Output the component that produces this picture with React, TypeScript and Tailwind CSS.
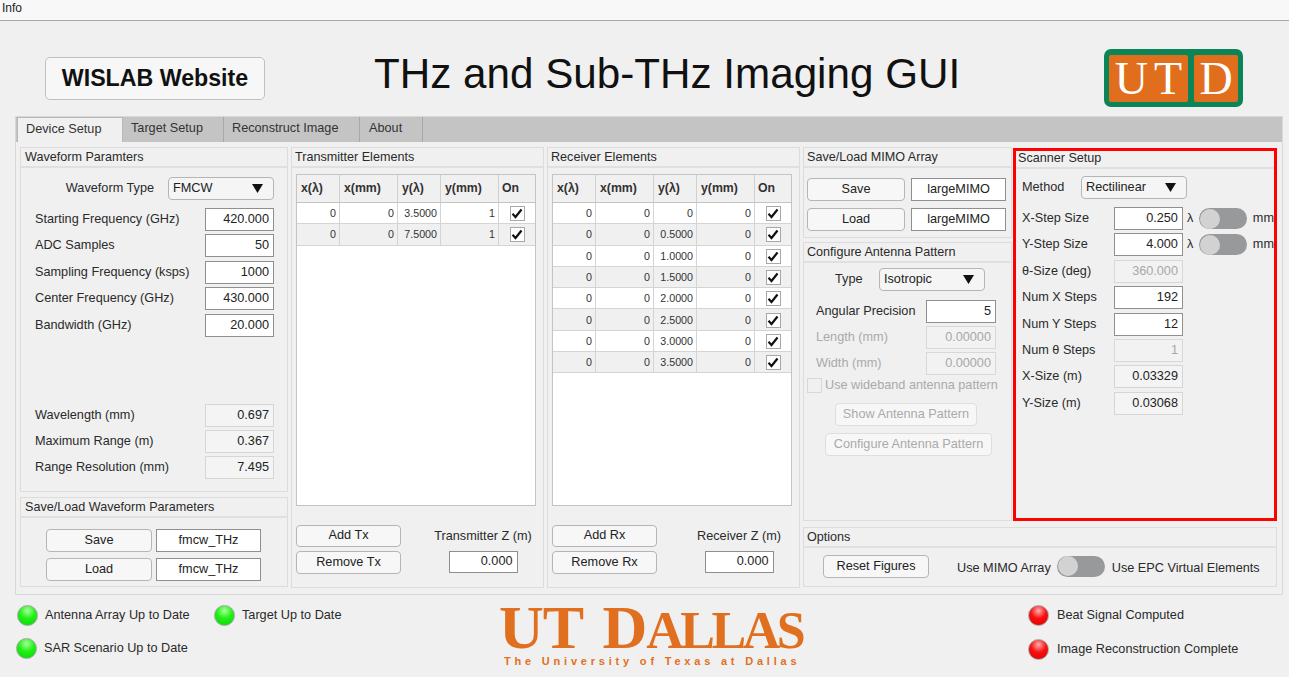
import type { ReactNode } from "react";

const sans = "font-['Liberation_Sans',Arial,sans-serif]";

function Panel({ title, className, titleInset = "pl-[3px]", children }: { title: string; className: string; titleInset?: string; children: ReactNode }) {
  return (
    <section className={`border border-[#dcdcdc] flex flex-col ${className}`}>
      <div className={`h-[18px] leading-[18px] border-b-2 border-[#e0e0e0] box-content text-[12.6px] text-[#2a2a2a] ${titleInset}`}>{title}</div>
      {children}
    </section>
  );
}

function Btn({ label, className, disabled }: { label: string; className: string; disabled?: boolean }) {
  return (
    <button
      className={`rounded-[4px] border-[1.5px] flex items-center justify-center bg-[#f7f7f7] text-[12.7px] ${disabled ? "border-[#dedede] text-[#aaaaaa]" : "border-[#b5b5b5] text-[#222222]"} ${className}`}
    >
      {label}
    </button>
  );
}

function Box({ value, kind = "edit", className = "w-[69px] h-[23px]", center }: { value: string; kind?: "edit" | "show" | "off"; className?: string; center?: boolean }) {
  const look =
    kind === "edit"
      ? "bg-white border-[#8f8f8f] text-[#222222]"
      : kind === "show"
        ? "bg-[#f4f4f4] border-[#d6d6d6] text-[#222222]"
        : "bg-[#f2f2f2] border-[#d8d8d8] text-[#a8a8a8]";
  return (
    <div className={`border-[1.5px] flex items-center text-[12.7px] shrink-0 ${center ? "justify-center" : "justify-end pr-[4px]"} ${look} ${className}`}>
      {value}
    </div>
  );
}

function Dropdown({ value, className = "" }: { value: string; className?: string }) {
  return (
    <div className={`w-[106px] h-[23px] rounded-[4px] border-[1.5px] border-[#b5b5b5] bg-[#f5f5f5] flex items-center justify-between pl-[4px] pr-[10px] text-[12.7px] text-[#222222] ${className}`}>
      <span>{value}</span>
      <svg width="11" height="9" viewBox="0 0 11 9">
        <path d="M0 0H11L5.5 9Z" fill="#111111" />
      </svg>
    </div>
  );
}

function Toggle() {
  return (
    <div className="w-[48px] h-[21px] rounded-full bg-[#98999b] shrink-0 flex items-center pl-[1px]">
      <div className="w-[20px] h-[20px] rounded-full bg-[#d2d2d2]" />
    </div>
  );
}

function Led({ on, className = "" }: { on: boolean; className?: string }) {
  const fill = on
    ? "bg-[radial-gradient(circle_at_50%_25%,#a8ff9c_0%,#22f016_45%,#00d800_100%)]"
    : "bg-[radial-gradient(circle_at_50%_25%,#ffb0b0_0%,#f81010_45%,#e00000_100%)]";
  return <div className={`w-[21px] h-[21px] rounded-full border border-[#a5a5a5] shrink-0 ${fill} ${className}`} />;
}

function Check() {
  return (
    <div className="w-[15px] h-[15px] border border-[#a8a8a8] bg-white flex items-center justify-center mt-[1px]">
      <svg width="12" height="11" viewBox="0 0 12 11">
        <path d="M1.5 5.8L4.5 9L10.5 1.5" fill="none" stroke="#111111" strokeWidth="2.2" />
      </svg>
    </div>
  );
}

const tableCols = "grid grid-cols-[43px_58px_43px_58px_36px]";

function ElementTable({ rows }: { rows: [string, string, string, string][] }) {
  return (
    <div className="w-[240px] h-[332px] border border-[#c4c4c4] bg-white">
      <div className={`${tableCols} h-[28px] bg-[#f0f0f0] border-b border-[#c4c4c4] text-[12.3px] font-bold text-[#333333]`}>
        {["x(λ)", "x(mm)", "y(λ)", "y(mm)", "On"].map((h) => (
          <div key={h} className="pl-[4px] flex items-center border-r border-[#d0d0d0] last:border-r-0 last:pl-[3px]">
            {h}
          </div>
        ))}
      </div>
      {rows.map((r, i) => (
        <div key={i} className={`${tableCols} h-[21.3px] border-b border-[#d4d4d4] text-[10.7px] text-[#333333] ${i % 2 ? "bg-[#f0f0f0]" : "bg-white"}`}>
          {r.map((v, j) => (
            <div key={j} className="flex items-center justify-end pr-[3px] border-r border-[#d4d4d4]">
              {v}
            </div>
          ))}
          <div className="flex items-center justify-center">
            <Check />
          </div>
        </div>
      ))}
    </div>
  );
}

function ElementPanel({ title, kind, zLabel, rows }: { title: string; kind: string; zLabel: string; rows: [string, string, string, string][] }) {
  return (
    <Panel title={title} className="w-[253px]">
      <div className="pl-[4px] pt-[6px]">
        <ElementTable rows={rows} />
        <div className="flex mt-[19px]">
          <div className="flex flex-col gap-[4px] w-[105px]">
            <Btn label={`Add ${kind}`} className="h-[22px]" />
            <Btn label={`Remove ${kind}`} className="h-[23px]" />
          </div>
          <div className="flex flex-col items-center ml-[33px] w-[98px]">
            <div className="text-[12.7px] text-[#2a2a2a] mt-[3px] leading-[16px] whitespace-nowrap">{zLabel}</div>
            <Box value="0.000" className="w-[69px] h-[22px] mt-[7px]" />
          </div>
        </div>
      </div>
    </Panel>
  );
}

function Row({ label, value, kind = "edit", className = "" }: { label: string; value: string; kind?: "edit" | "show" | "off"; className?: string }) {
  return (
    <div className={`flex items-center justify-between h-[23px] pl-[14px] pr-[13px] text-[12.7px] text-[#2a2a2a] ${className}`}>
      <span>{label}</span>
      <Box value={value} kind={kind} />
    </div>
  );
}

function ScanRow({ label, value, kind = "edit", toggle }: { label: string; value: string; kind?: "edit" | "show" | "off"; toggle?: boolean }) {
  return (
    <div className="flex items-center h-[23px] pl-[6px] text-[12.7px] text-[#2a2a2a]">
      <span className="w-[92px]">{label}</span>
      <Box value={value} kind={kind} />
      {toggle && (
        <>
          <span className="w-[16px] pl-[4px]">λ</span>
          <Toggle />
          <span className="pl-[6px]">mm</span>
        </>
      )}
    </div>
  );
}

const txRows: [string, string, string, string][] = [
  ["0", "0", "3.5000", "1"],
  ["0", "0", "7.5000", "1"],
];
const rxRows: [string, string, string, string][] = ["0", "0.5000", "1.0000", "1.5000", "2.0000", "2.5000", "3.0000", "3.5000"].map((y) => ["0", "0", y, "0"]);

function UtdLogo() {
  return (
    <div className="w-[139px] h-[58px] rounded-[7px] bg-[#0b8458] flex gap-[6px] p-[5px] pt-[6px] font-['Liberation_Serif',serif] text-white text-[46px] leading-[48px]">
      <div className="w-[79px] h-[47px] rounded-[2px] bg-[#e06e1c] flex justify-center gap-[6px]">
        <span>U</span>
        <span>T</span>
      </div>
      <div className="w-[44px] h-[47px] rounded-[2px] bg-[#e06e1c] text-center">D</div>
    </div>
  );
}

function UtDallas() {
  return (
    <div className="w-[304px] font-['Liberation_Serif',serif] text-[#e0701f] flex flex-col items-start">
      <div className="h-[48px] leading-[50px] font-bold whitespace-nowrap text-[62px] tracking-[-1px]">
        UT <span className="ml-[6px]">D</span>
        <span className="text-[52px] tracking-[-3.5px]">ALLAS</span>
      </div>
      <div className={`${sans} font-bold text-[11px] leading-[14px] mt-[4px] ml-[5px] tracking-[3.8px] whitespace-nowrap`}>The University of Texas at Dallas</div>
    </div>
  );
}

export default function App() {
  return (
    <div className={`w-[1289px] h-[677px] overflow-hidden bg-[#f0f0f0] ${sans}`}>
      {/* Menu bar */}
      <div className="h-[21px] bg-[#f8f8f8] border-b border-[#a8a8a8] pl-[2px] text-[12px] leading-[17px] text-[#222222]">Info</div>

      {/* Header */}
      <header className="h-[95px] flex items-start">
        <button className="ml-[45px] mt-[36px] w-[220px] h-[43px] rounded-[5px] border-[1.5px] border-[#c0c0c0] bg-[#f7f7f7] text-[23.2px] font-bold text-[#111111]">
          WISLAB Website
        </button>
        <h1 className="ml-[109px] mt-[26px] w-[586px] text-[42.2px] leading-[54px] text-[#111111] whitespace-nowrap">THz and Sub-THz Imaging GUI</h1>
        <div className="ml-[144px] mt-[28px]">
          <UtdLogo />
        </div>
      </header>

      {/* Tabs */}
      <div className="ml-[15px] w-[1268px] h-[479px] border border-[#d8d8d8]">
        <div className="h-[25px] bg-[#c4c4c4] flex pl-[1px] text-[12.7px] text-[#333333]">
          <div className="w-[106px] bg-[#f0f0f0] border-x border-t border-[#b8b8b8] pl-[8px] leading-[23px]">Device Setup</div>
          <div className="w-[101px] border-r border-[#a8a8a8] pl-[8px] leading-[23px]">Target Setup</div>
          <div className="w-[136px] border-r border-[#a8a8a8] pl-[8px] leading-[23px]">Reconstruct Image</div>
          <div className="w-[63px] border-r border-[#a8a8a8] pl-[9px] leading-[23px]">About</div>
        </div>

        <div className="flex gap-[3px] pl-[4px] pt-[5px] h-[446px]">
          {/* Waveform column */}
          <div className="w-[268px] flex flex-col gap-[5px]">
            <Panel title="Waveform Paramters" titleInset="pl-[4px]" className="h-[345px]">
              <div className="flex items-center mt-[9px] h-[23px] text-[12.7px] text-[#2a2a2a]">
                <span className="w-[133px] text-right">Waveform Type</span>
                <Dropdown value="FMCW" className="ml-[14px]" />
              </div>
              <div className="flex flex-col gap-[3.4px] mt-[8px]">
                <Row label="Starting Frequency (GHz)" value="420.000" />
                <Row label="ADC Samples" value="50" />
                <Row label="Sampling Frequency (ksps)" value="1000" />
                <Row label="Center Frequency (GHz)" value="430.000" />
                <Row label="Bandwidth (GHz)" value="20.000" />
              </div>
              <div className="flex flex-col gap-[3.4px] mt-[67px]">
                <Row label="Wavelength (mm)" value="0.697" kind="show" />
                <Row label="Maximum Range (m)" value="0.367" kind="show" />
                <Row label="Range Resolution (mm)" value="7.495" kind="show" />
              </div>
            </Panel>
            <Panel title="Save/Load Waveform Parameters" titleInset="pl-[4px]" className="h-[90px]">
              <div className="pl-[25px] pt-[11px] flex flex-col gap-[6px]">
                <div className="flex gap-[4px]">
                  <Btn label="Save" className="w-[106px] h-[23px]" />
                  <Box value="fmcw_THz" center className="w-[105px] h-[23px]" />
                </div>
                <div className="flex gap-[4px]">
                  <Btn label="Load" className="w-[106px] h-[23px]" />
                  <Box value="fmcw_THz" center className="w-[105px] h-[23px]" />
                </div>
              </div>
            </Panel>
          </div>

          <ElementPanel title="Transmitter Elements" kind="Tx" zLabel="Transmitter Z (m)" rows={txRows} />
          <ElementPanel title="Receiver Elements" kind="Rx" zLabel="Receiver Z (m)" rows={rxRows} />

          {/* Right column */}
          <div className="w-[474px] flex flex-col gap-[6px]">
            <div className="flex gap-[1px] h-[374px]">
              <div className="w-[209px] shrink-0 flex flex-col gap-[4px]">
                <Panel title="Save/Load MIMO Array" className="h-[91px]">
                  <div className="pl-[3px] pt-[10px] flex flex-col gap-[7px]">
                    <div className="flex gap-[6px]">
                      <Btn label="Save" className="w-[98px] h-[23px]" />
                      <Box value="largeMIMO" center className="w-[95px] h-[23px]" />
                    </div>
                    <div className="flex gap-[6px]">
                      <Btn label="Load" className="w-[98px] h-[23px]" />
                      <Box value="largeMIMO" center className="w-[95px] h-[23px]" />
                    </div>
                  </div>
                </Panel>
                <Panel title="Configure Antenna Pattern" className="h-[279px]">
                  <div className="flex items-center h-[23px] mt-[5px] text-[12.7px] text-[#2a2a2a]">
                    <span className="ml-[31px] w-[44px]">Type</span>
                    <Dropdown value="Isotropic" />
                  </div>
                  <div className="flex flex-col gap-[3.4px] mt-[9px] text-[12.7px] pl-[12px]">
                    <div className="flex items-center h-[23px] text-[#2a2a2a]">
                      <span className="w-[110px]">Angular Precision</span>
                      <Box value="5" className="w-[70px] h-[23px]" />
                    </div>
                    <div className="flex items-center h-[22.6px] text-[#aaaaaa]">
                      <span className="w-[110px]">Length (mm)</span>
                      <Box value="0.00000" kind="off" className="w-[70px] h-[23px]" />
                    </div>
                    <div className="flex items-center h-[22.6px] text-[#aaaaaa]">
                      <span className="w-[110px]">Width (mm)</span>
                      <Box value="0.00000" kind="off" className="w-[70px] h-[23px]" />
                    </div>
                  </div>
                  <div className="flex items-center h-[15px] mt-[3px] ml-[3px] text-[12.7px] text-[#aaaaaa] whitespace-nowrap">
                    <div className="w-[15px] h-[15px] border border-[#d8d8d8] mr-[3px] shrink-0" />
                    Use wideband antenna pattern
                  </div>
                  <Btn disabled label="Show Antenna Pattern" className="w-[142px] h-[23px] ml-[31px] mt-[10px]" />
                  <Btn disabled label="Configure Antenna Pattern" className="w-[167px] h-[23px] ml-[21px] mt-[7px]" />
                </Panel>
              </div>

              {/* Scanner */}
              <section className="w-[264px] h-[373px] mt-[1px] shrink-0 border-[3px] border-[#ff0000] flex flex-col">
                <div className="h-[16px] leading-[14px] pl-[2px] border-b-2 border-[#e0e0e0] box-content text-[12.6px] text-[#2a2a2a]">Scanner Setup</div>
                <div className="flex items-center h-[23px] pl-[6px] mt-[7px] text-[12.7px] text-[#2a2a2a]">
                  <span className="w-[59px]">Method</span>
                  <Dropdown value="Rectilinear" />
                </div>
                <div className="flex flex-col gap-[3.4px] mt-[8px]">
                  <ScanRow label="X-Step Size" value="0.250" toggle />
                  <ScanRow label="Y-Step Size" value="4.000" toggle />
                  <ScanRow label="θ-Size (deg)" value="360.000" kind="off" />
                  <ScanRow label="Num X Steps" value="192" />
                  <ScanRow label="Num Y Steps" value="12" />
                  <ScanRow label="Num θ Steps" value="1" kind="off" />
                  <ScanRow label="X-Size (m)" value="0.03329" kind="show" />
                  <ScanRow label="Y-Size (m)" value="0.03068" kind="show" />
                </div>
              </section>
            </div>

            <Panel title="Options" className="h-[60px]">
              <div className="flex items-center h-[39px] text-[12.7px] text-[#2a2a2a]">
                <Btn label="Reset Figures" className="w-[106px] h-[23px] ml-[19px] mb-[1px]" />
                <span className="ml-[28px] mt-[4px]">Use MIMO Array</span>
                <div className="ml-[6px] mb-[2px]">
                  <Toggle />
                </div>
                <span className="ml-[7px] mt-[4px]">Use EPC Virtual Elements</span>
              </div>
            </Panel>
          </div>
        </div>
      </div>

      {/* Status lights */}
      <footer className="flex text-[12.7px] text-[#2a2a2a] pt-[10px]">
        <div className="w-[482px] pl-[16px] flex flex-col gap-[12px]">
          <div className="flex items-center h-[21px]">
            <Led on className="ml-[1px]" />
            <span className="ml-[7px] w-[169px]">Antenna Array Up to Date</span>
            <Led on />
            <span className="ml-[7px]">Target Up to Date</span>
          </div>
          <div className="flex items-center h-[21px]">
            <Led on />
            <span className="ml-[7px]">SAR Scenario Up to Date</span>
          </div>
        </div>
        <div className="ml-[17px] w-[304px] -mt-[3px]">
          <UtDallas />
        </div>
        <div className="ml-[225px] flex flex-col gap-[13px]">
          <div className="flex items-center h-[21px]">
            <Led on={false} />
            <span className="ml-[8px]">Beat Signal Computed</span>
          </div>
          <div className="flex items-center h-[21px]">
            <Led on={false} />
            <span className="ml-[8px]">Image Reconstruction Complete</span>
          </div>
        </div>
      </footer>
    </div>
  );
}
